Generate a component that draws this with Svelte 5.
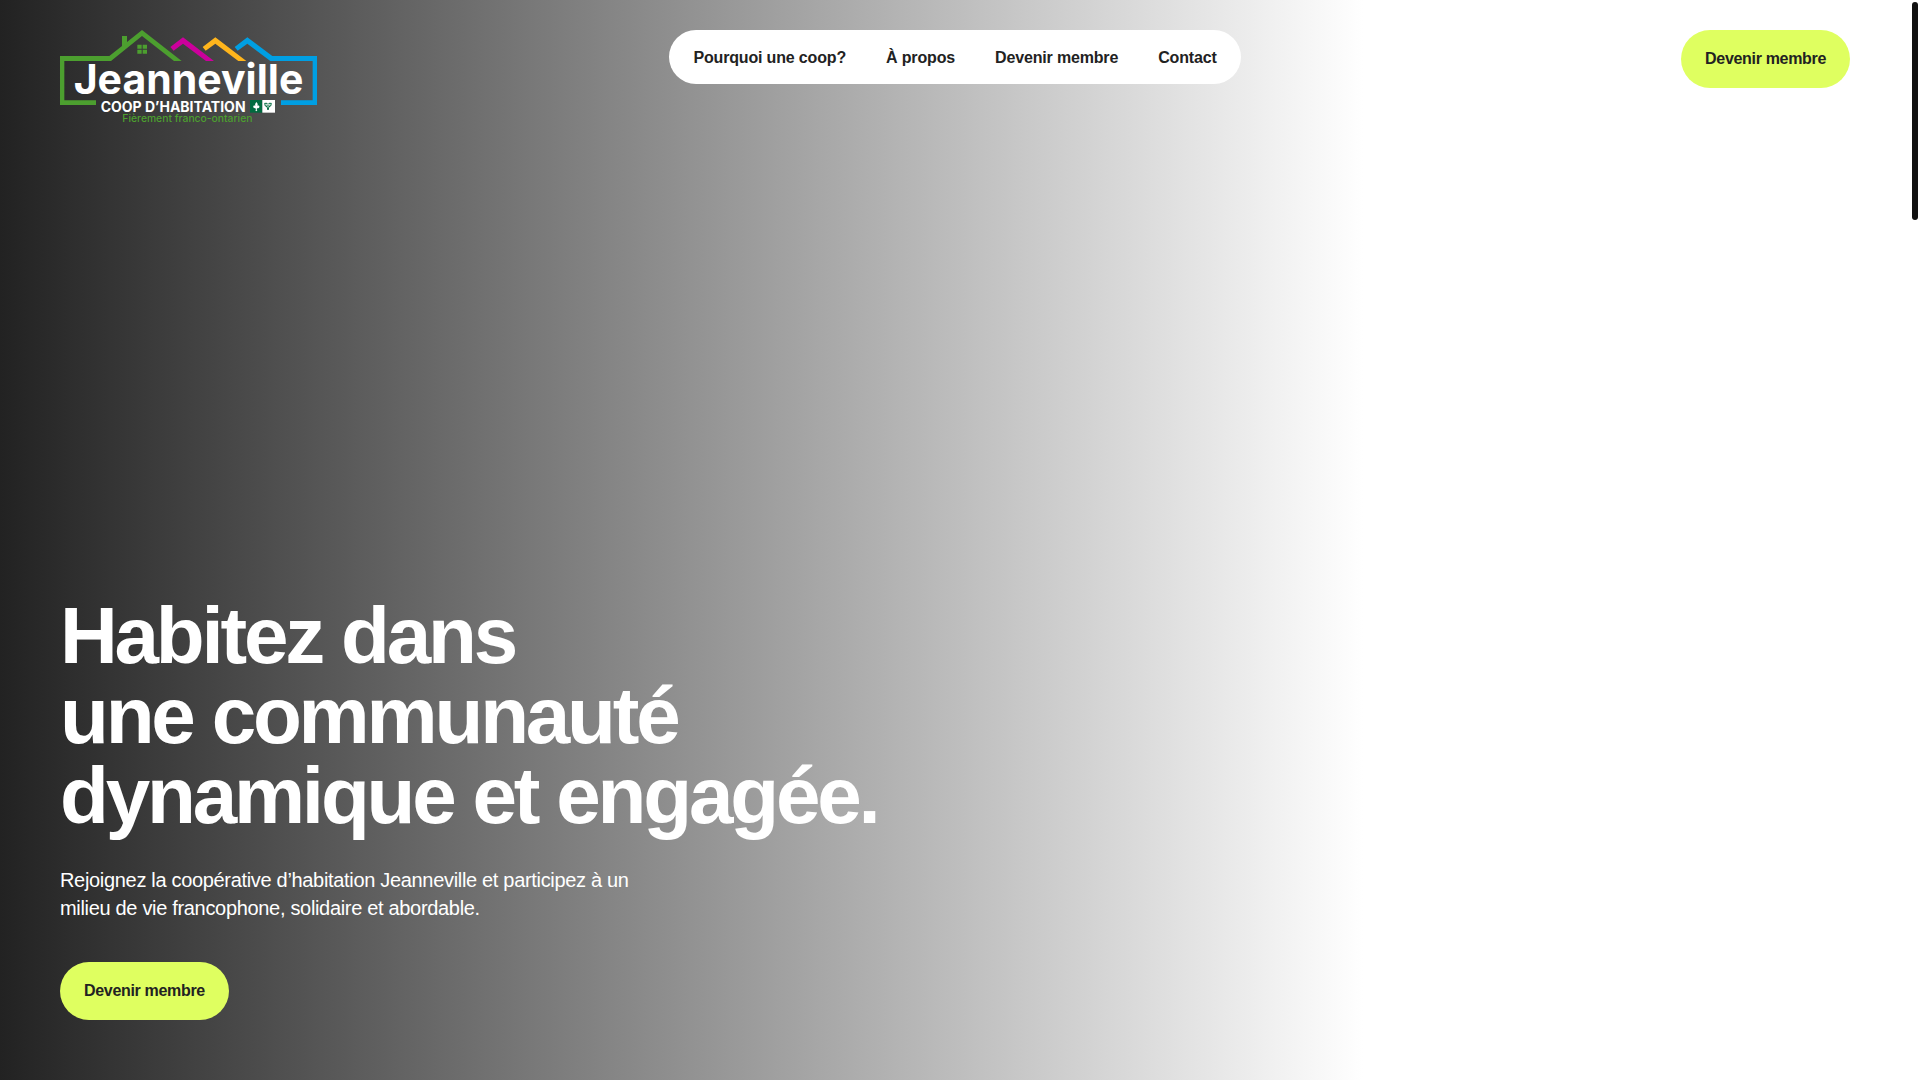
<script>
  const links = [
    { label: 'Pourquoi une coop?', href: '#pourquoi' },
    { label: 'À propos', href: '#a-propos' },
    { label: 'Devenir membre', href: '#devenir-membre' },
    { label: 'Contact', href: '#contact' },
  ];
</script>

<div class="page">
  <header class="header">
    <a class="logo" href="#accueil" aria-label="Jeanneville, coop d’habitation">
      <svg viewBox="30 30 771 282" role="img" aria-hidden="true">
        <path
          fill="#4c9f2f"
          d="M138 241v14H30V108h148l38-30V48h15v18l45-36 119 93h-23l-96-75-93 75H43v118z"
        />
        <path fill="#4c9f2f" d="M262 74h13v12h-13zM278 74h13v12h-13zM262 89h13v12h-13zM278 89h13v12h-13z" />
        <path fill="#cc009c" d="M361 81l38-29 93 71h-24l-69-52-28 21z" />
        <path fill="#ffb51c" d="M458 81l38-29 93 71h-24l-69-52-29 21z" />
        <path fill="#009fe3" d="M554 81l38-29 75 56h134v147H693v-14h95V123H661l-69-52-29 21z" />
        <text class="name" x="71" y="222">Jeanneville</text>
        <text class="kind" x="152" y="275">COOP D’HABITATION</text>
        <text class="motto" x="217" y="305">Fièrement franco-ontarien</text>
        <path fill="#006b3f" d="M600 240h37v38h-37z" />
        <path fill="#fff" d="M637 240h38v38h-38z" />
        <path
          fill="#fff"
          d="M619 246c5 5 5 9 2 13l-1 3c0-7 10-8 8 0-1 3-4 3-5 1 0 2-1 3-3 3 0 2 1 4 2 5l-3 3-3-3c1-1 2-3 2-5-2 0-3-1-3-3-1 2-4 2-5-1-2-8 8-7 8 0l-1-3c-3-4-2-8 2-13z"
        />
        <path
          fill="none"
          stroke="#006b3f"
          stroke-width="3"
          stroke-linejoin="round"
          d="M644 250h7l3 3 3-3h7l-2 8-5 2-3 10-3-10-5-2zM649 255l5 4 5-4"
        />
      </svg>
    </a>

    <nav class="nav" aria-label="Navigation principale">
      {#each links as link}
        <a href={link.href}>{link.label}</a>
      {/each}
    </nav>

    <div class="action">
      <a class="button" href="#devenir-membre">Devenir membre</a>
    </div>
  </header>

  <main class="hero">
    <h1>Habitez dans<br />une communauté<br />dynamique et engagée.</h1>
    <p>Rejoignez la coopérative d’habitation Jeanneville et participez à un milieu de vie francophone, solidaire et abordable.</p>
    <a class="button" href="#devenir-membre">Devenir membre</a>
  </main>

  <div class="scroll-thumb"></div>
</div>

<style>
  :global(body) {
    margin: 0;
    background: #fff;
  }

  .page {
    display: flex;
    flex-direction: column;
    justify-content: space-between;
    box-sizing: border-box;
    min-height: 100vh;
    padding: 30px 70px 60px 60px;
    background: linear-gradient(90deg, #222 0%, #fff 71%);
    color: #222;
    font-family: 'Liberation Sans', Arial, sans-serif;
    font-size: 16px;
    letter-spacing: -0.02em;
  }

  .header {
    display: grid;
    grid-template-columns: 1fr auto 1fr;
    align-items: start;
  }

  .logo {
    display: block;
    width: 257px;
  }

  .logo svg {
    display: block;
    width: 100%;
    overflow: visible;
  }

  .logo text {
    letter-spacing: 0;
  }

  .name {
    fill: #fff;
    font: 700 123px Inter, sans-serif;
  }

  .kind {
    fill: #fff;
    font: 700 42px Inter, sans-serif;
  }

  .motto {
    fill: #4c9f2f;
    font: 500 31px Inter, sans-serif;
  }

  .nav {
    display: flex;
    gap: 40px;
    padding: 17px 24px 15px;
    border-radius: 27px;
    background: #fff;
    font-weight: 700;
    line-height: 22px;
    letter-spacing: -0.01em;
  }

  .nav a {
    color: inherit;
    text-decoration: none;
  }

  .action {
    justify-self: end;
  }

  .button {
    display: block;
    padding: 18px 24px;
    border-radius: 29px;
    background: #dfff60;
    color: #222;
    font-weight: 700;
    line-height: 22px;
    text-decoration: none;
  }

  .hero {
    display: flex;
    flex-direction: column;
    align-items: flex-start;
    color: #fff;
  }

  h1 {
    margin: 0 0 30px;
    font-size: 80px;
    line-height: 80px;
    letter-spacing: -0.04em;
  }

  p {
    max-width: 600px;
    margin: 0 0 40px;
    font-size: 20px;
    line-height: 28px;
  }

  .scroll-thumb {
    position: fixed;
    top: 2px;
    right: 2px;
    width: 6px;
    height: 218px;
    border-radius: 3px;
    background: #111;
  }
</style>
